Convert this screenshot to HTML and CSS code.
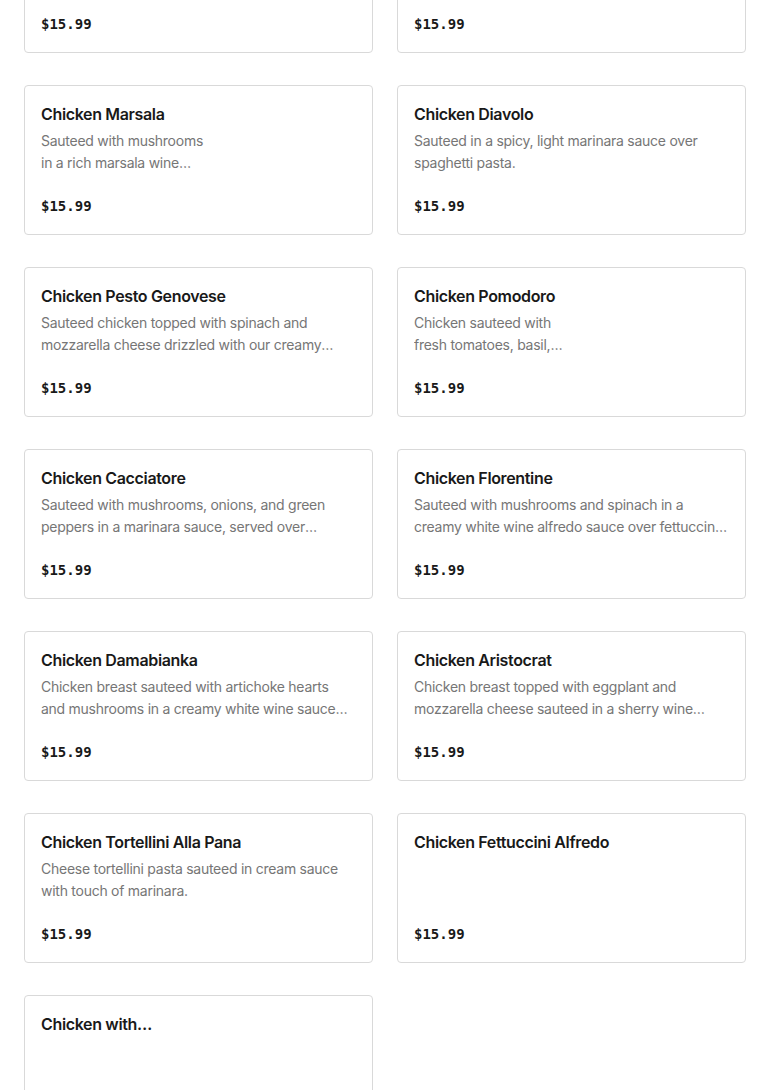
FILE: index.html
```html
<!DOCTYPE html>
<html lang="en">
<head>
<meta charset="utf-8">
<title>Menu</title>
<link rel="stylesheet" href="styles.css">
</head>
<body>
<main class="menu">
  <div class="card">
    <h3 class="title">Chicken Parmigiana</h3>
    <p class="desc">Breaded chicken breast topped with marinara sauce and melted mozzarella cheese, served over spaghetti.</p>
    <div class="price">$15.99</div>
  </div>
  <div class="card">
    <h3 class="title">Chicken Francese</h3>
    <p class="desc">Egg battered chicken sauteed in a lemon butter white wine sauce over linguine.</p>
    <div class="price">$15.99</div>
  </div>

  <div class="card">
    <h3 class="title">Chicken Marsala</h3>
    <p class="desc">Sauteed with mushrooms
in a rich marsala wine
sauce over linguine.</p>
    <div class="price">$15.99</div>
  </div>
  <div class="card">
    <h3 class="title">Chicken Diavolo</h3>
    <p class="desc">Sauteed in a spicy, light marinara sauce over spaghetti pasta.</p>
    <div class="price">$15.99</div>
  </div>

  <div class="card">
    <h3 class="title">Chicken Pesto Genovese</h3>
    <p class="desc">Sauteed chicken topped with spinach and mozzarella cheese drizzled with our creamy pesto sauce over linguine.</p>
    <div class="price">$15.99</div>
  </div>
  <div class="card">
    <h3 class="title">Chicken Pomodoro</h3>
    <p class="desc">Chicken sauteed with
fresh tomatoes, basil,
garlic and olive oil.</p>
    <div class="price">$15.99</div>
  </div>

  <div class="card">
    <h3 class="title">Chicken Cacciatore</h3>
    <p class="desc">Sauteed with mushrooms, onions, and green peppers in a marinara sauce, served over linguine.</p>
    <div class="price">$15.99</div>
  </div>
  <div class="card">
    <h3 class="title">Chicken Florentine</h3>
    <p class="desc">Sauteed with mushrooms and spinach in a creamy white wine alfredo sauce over fettuccini pasta.</p>
    <div class="price">$15.99</div>
  </div>

  <div class="card">
    <h3 class="title">Chicken Damabianka</h3>
    <p class="desc">Chicken breast sauteed with artichoke hearts and mushrooms in a creamy white wine sauce over linguine.</p>
    <div class="price">$15.99</div>
  </div>
  <div class="card">
    <h3 class="title">Chicken Aristocrat</h3>
    <p class="desc">Chicken breast topped with eggplant and mozzarella cheese sauteed in a sherry wine sauce.</p>
    <div class="price">$15.99</div>
  </div>

  <div class="card">
    <h3 class="title">Chicken Tortellini Alla Pana</h3>
    <p class="desc">Cheese tortellini pasta sauteed in cream sauce with touch of marinara.</p>
    <div class="price">$15.99</div>
  </div>
  <div class="card">
    <h3 class="title">Chicken Fettuccini Alfredo</h3>
    <div class="price">$15.99</div>
  </div>

  <div class="card">
    <h3 class="title title-clamp">Chicken with
Broccoli Alfredo</h3>
    <div class="price">$15.99</div>
  </div>
</main>
</body>
</html>
```

FILE: styles.css
```css
* { box-sizing: border-box; }

html, body {
  margin: 0;
  padding: 0;
  background: #ffffff;
}

body {
  font-family: "Inter", "Liberation Sans", sans-serif;
  color: #191919;
  overflow: hidden;
}

.menu {
  display: grid;
  grid-template-columns: 349px 349px;
  column-gap: 24px;
  row-gap: 32px;
  padding: 0 24px;
  margin-top: -97px;
}

.card {
  height: 150px;
  border: 1px solid #d9d9d9;
  border-radius: 4px;
  padding: 16px;
  display: flex;
  flex-direction: column;
  background: #fff;
}

.title {
  margin: 0;
  font-size: 16px;
  font-weight: 600;
  line-height: 24px;
  letter-spacing: -0.35px;
  color: #191919;
}

.title-clamp {
  white-space: pre-line;
  display: -webkit-box;
  -webkit-box-orient: vertical;
  -webkit-line-clamp: 1;
  overflow: hidden;
}

.desc {
  margin: 4px 0 0;
  font-size: 14px;
  line-height: 22px;
  letter-spacing: -0.26px;
  color: #767676;
  white-space: pre-line;
  display: -webkit-box;
  -webkit-box-orient: vertical;
  -webkit-line-clamp: 2;
  overflow: hidden;
}

.price {
  margin-top: auto;
  font-family: "DejaVu Sans Mono", "Liberation Mono", monospace;
  font-weight: 700;
  font-size: 14px;
  line-height: 24px;
  color: #191919;
}
```
